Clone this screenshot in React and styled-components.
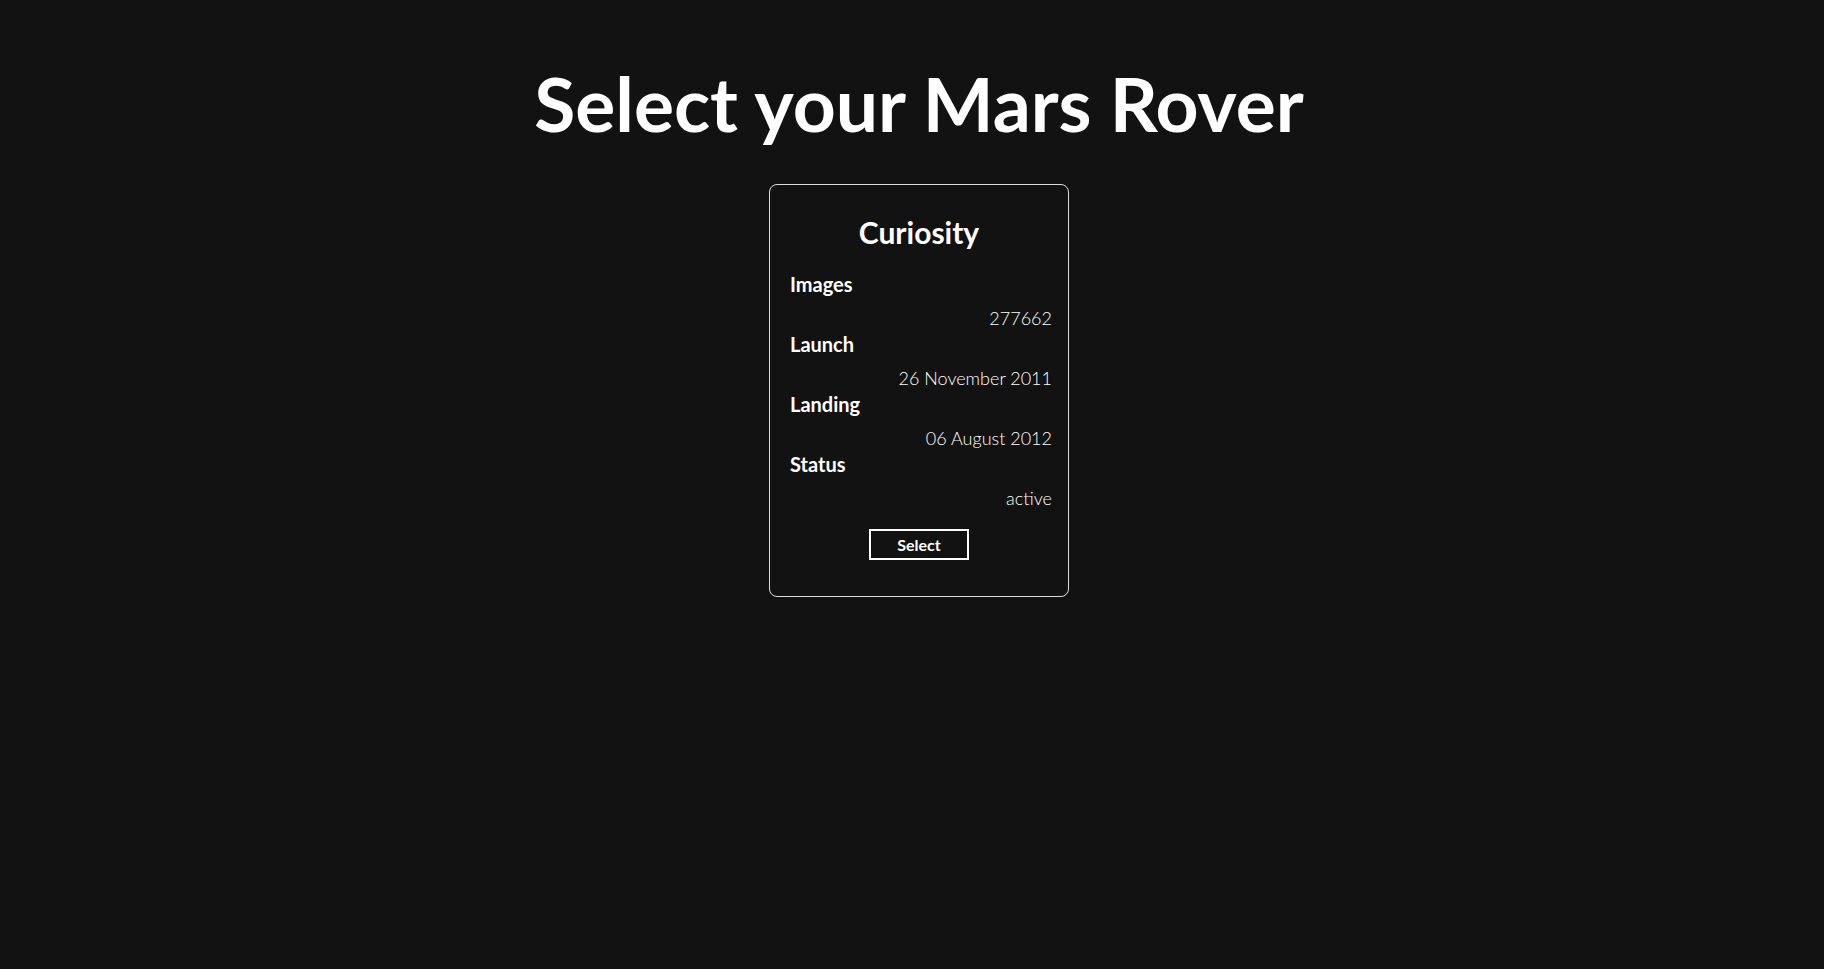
import styled, { createGlobalStyle } from "styled-components";

const GlobalStyle = createGlobalStyle`
	body {
		margin: 0;
		background-color: #121212;
		color: #ffffff;
		font-family: "Lato", "Noto Sans", sans-serif;
	}
`;

const rovers = [
	{
		name: "Curiosity",
		images: 277662,
		launch: "26 November 2011",
		landing: "06 August 2012",
		status: "active",
	},
];

const RoverCard = ({ rover }) => {
	return (
		<Card>
			<Name>{rover.name}</Name>
			<Label>Images</Label>
			<Value>{rover.images}</Value>
			<Label>Launch</Label>
			<Value>{rover.launch}</Value>
			<Label>Landing</Label>
			<Value>{rover.landing}</Value>
			<Label>Status</Label>
			<Value>{rover.status}</Value>
			<ButtonContainer>
				<SelectButton>Select</SelectButton>
			</ButtonContainer>
		</Card>
	);
};

const App = () => {
	return (
		<Page>
			<GlobalStyle />
			<Title>Select your Mars Rover</Title>
			<CardList>
				{rovers.map((rover) => (
					<RoverCard key={rover.name} rover={rover} />
				))}
			</CardList>
		</Page>
	);
};

const Page = styled.main`
	min-height: 100vh;
	display: flex;
	flex-direction: column;
	align-items: center;
	padding: 60px 0 0 14px;
	box-sizing: border-box;
`;

const Title = styled.h1`
	margin: 0;
	font-size: 75px;
	font-weight: 700;
	line-height: 86px;
	text-align: center;
`;

const CardList = styled.section`
	display: flex;
	justify-content: center;
	gap: 2em;
	margin-top: 38px;
`;

const Card = styled.article`
	width: 300px;
	box-sizing: border-box;
	border: 1px solid #dcdcdc;
	border-radius: 8px;
	padding: 29px 20px 36px;
	display: flex;
	flex-direction: column;
`;

const Name = styled.h2`
	margin: 0 0 21px;
	font-size: 30px;
	font-weight: 700;
	line-height: 36px;
	text-align: center;
`;

const Label = styled.h3`
	margin: 0;
	font-size: 20px;
	font-weight: 700;
	line-height: 26px;
`;

const Value = styled.p`
	margin: 9px -4px 0 0;
	font-size: 18px;
	font-weight: 300;
	line-height: 25px;
	text-align: right;
`;

const ButtonContainer = styled.footer`
	display: flex;
	justify-content: center;
	margin-top: 18px;
`;

const SelectButton = styled.button`
	width: 100px;
	height: 31px;
	padding: 0;
	font-family: inherit;
	font-size: 16px;
	font-weight: 700;
	color: #ffffff;
	background: none;
	border: 2px solid #ffffff;
	cursor: pointer;
`;

export default App;
